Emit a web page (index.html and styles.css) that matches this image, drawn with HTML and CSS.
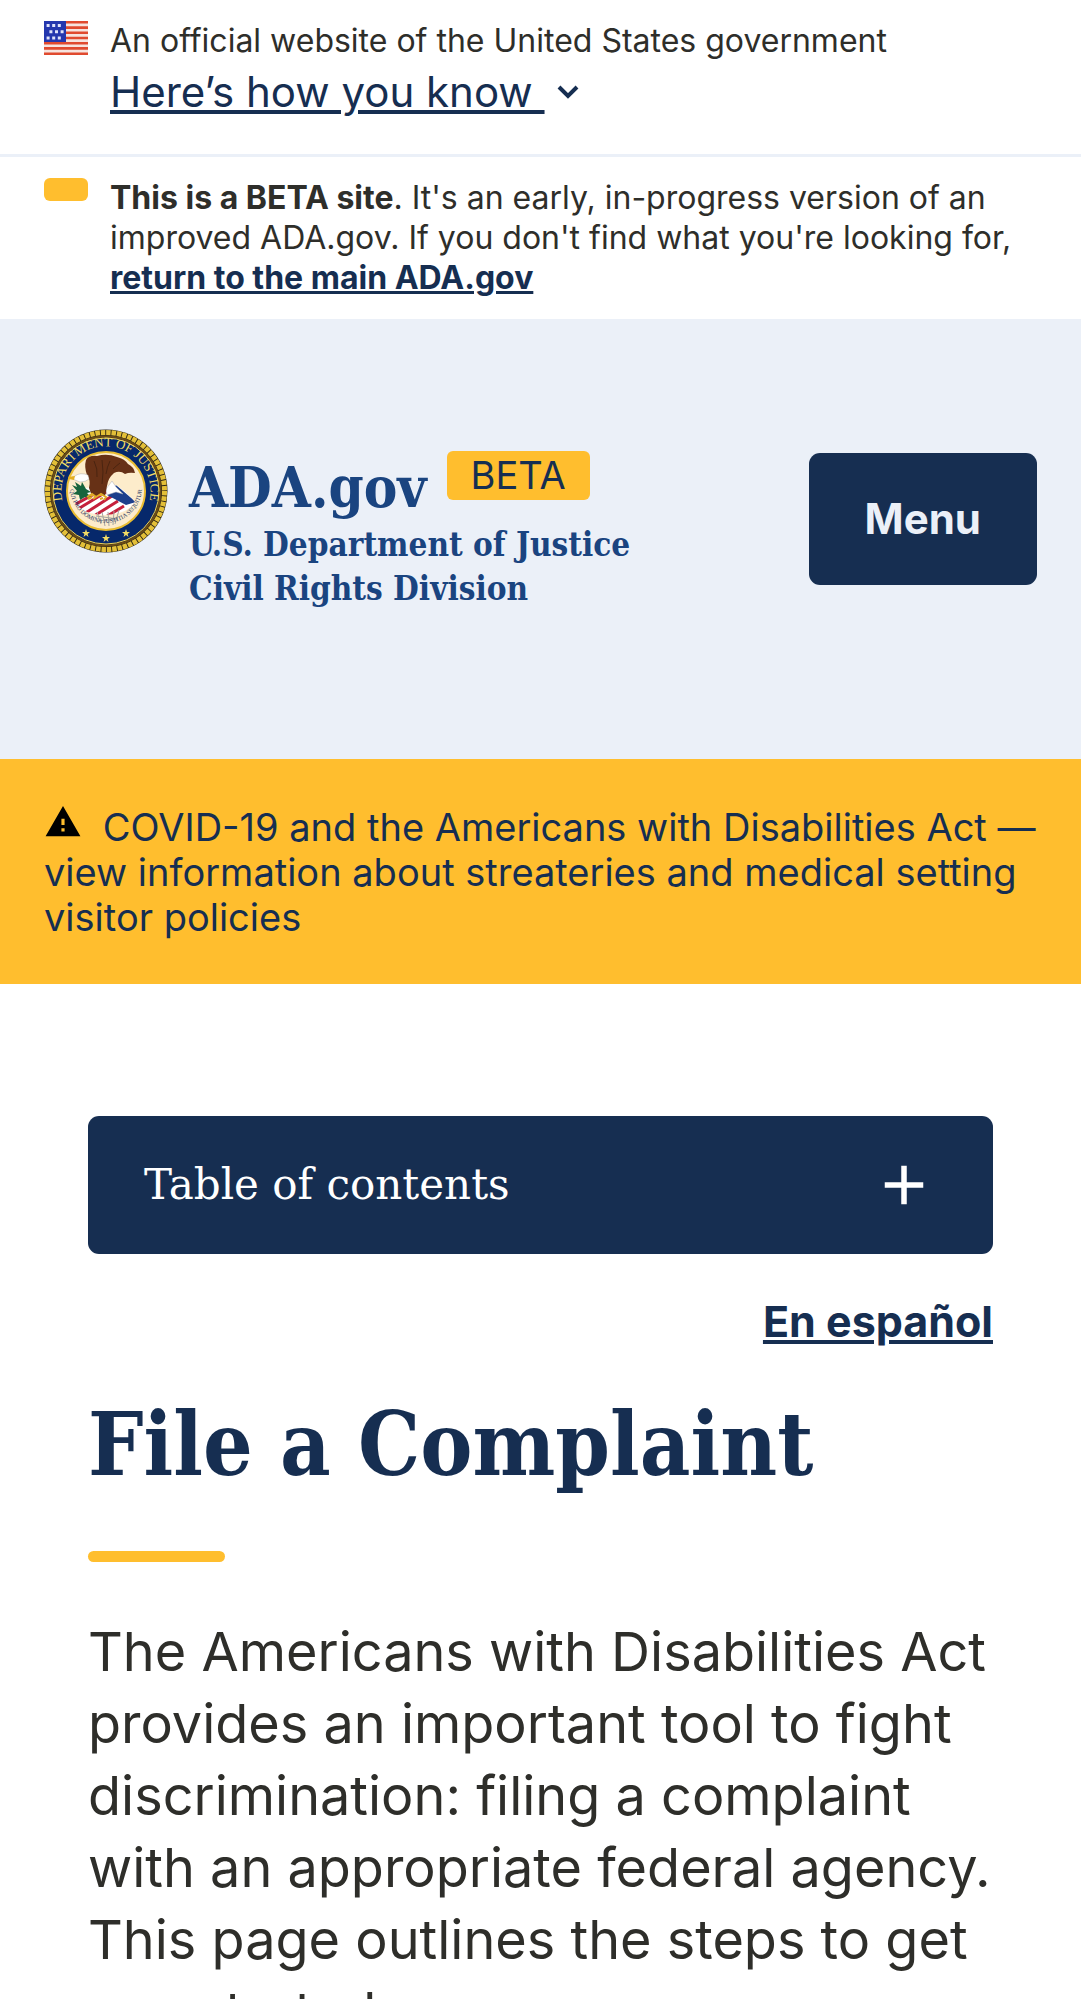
FILE: index.html
```html
<!DOCTYPE html>
<html lang="en">
<head>
<meta charset="utf-8">
<meta name="viewport" content="width=device-width, initial-scale=1">
<title>File a Complaint | ADA.gov</title>
<link rel="stylesheet" href="styles.css">
</head>
<body>
<section class="banner" aria-label="Official government website">
  <svg class="banner-flag" viewBox="0 0 44 34" aria-hidden="true">
    <rect width="44" height="34" fill="#f6e4df"/>
    <path stroke="#e04a2f" stroke-width="2.6" d="M0 1.3h44M0 6.6h44M0 11.8h44M0 17h44M0 22.2h44M0 27.4h44M0 32.7h44"/>
    <rect width="22" height="21" fill="#2437ae"/>
    <path stroke="#dfe3fa" stroke-width="3" stroke-dasharray="3 2.6" d="M2.6 4.5h14.2M5.4 10.7h14.2M2.6 17h14.2"/>
  </svg>
  <div class="banner-text">
    <p class="small">An official website of the United States government</p>
    <button class="banner-toggle" type="button"><span>Here’s how you know </span><svg class="chevron" viewBox="0 0 22 14" aria-hidden="true"><path d="M2 2l9 9 9-9" fill="none" stroke="currentColor" stroke-width="4"/></svg></button>
  </div>
</section>

<section class="beta" aria-label="Beta notice">
  <span class="beta-pill"></span>
  <p class="small"><strong>This is a BETA site</strong>. It's an early, in-progress version of an improved ADA.gov. If you don't find what you're looking for, <a class="beta-link" href="#">return to the main ADA.gov</a></p>
</section>

<header class="header">
  <svg class="seal" viewBox="0 0 124 124" role="img" aria-label="Department of Justice seal">
    <defs>
      <path id="ring-top" d="M20.5 78 A44.5 44.5 0 1 1 103.500 78"/>
      <path id="ring-motto" d="M26 58 A36 36 0 1 0 98 58"/>
      <clipPath id="shield"><path d="M31 74Q38 68 40 59L72 56Q84 64 91 73Q84 85 61 86Q40 86 31 74z"/></clipPath>
    </defs>
    <circle cx="62" cy="62" r="61.500" fill="#2b2415"/>
    <circle cx="62" cy="62" r="58.500" fill="none" stroke="#e3bf38" stroke-width="5" stroke-dasharray="4.500 .9"/>
    <circle cx="62" cy="62" r="54.500" fill="none" stroke="#6b4c17" stroke-width="2"/>
    <circle cx="62" cy="62" r="53" fill="#06286b" stroke="#f0d357" stroke-width="1"/>
    <circle cx="62" cy="62" r="39" fill="#fdeccb" stroke="#e9bd32" stroke-width="2"/>
    <text class="seal-name"><textPath href="#ring-top" startOffset="50%" text-anchor="middle">DEPARTMENT OF JUSTICE</textPath></text>
    <g clip-path="url(#shield)">
      <path d="M28 52h66v36H28z" fill="#fff"/>
      <path stroke="#c5203c" stroke-width="3" d="M30 76l24-13M34 80l28-17M40 85l28-18M50 87l24-15M60 89l20-12"/>
      <path d="M63 66l9-10 20 17-10 3z" fill="#1c3f8c"/>
    </g>
    <path d="M53 83l4 12M58 83l3 14M64 83l1 14M70 82l-1 14M75 81l-4 14M52 87l22 3M54 92l19-2" stroke="#a5a5a0" stroke-width="1" fill="none"/>
    <text class="seal-motto"><textPath href="#ring-motto" startOffset="50%" text-anchor="middle">QUI PRO DOMINA JUSTITIA SEQUITUR</textPath></text>
    <path d="M28 56l5 2-2-5 6 4 1-4 4 7 5 3-4 1 5 5-7-1-5 3-1-5-6-1 4-3z" fill="#17643d"/>
    <path d="M62 60l6-8 4 6 7 7-7-2-9 3z" fill="#fff" stroke="#a9adb5" stroke-width=".5"/>
    <path d="M42 31Q45 26 53 27Q63 24 73 28Q81 30 84 35Q90 38 91 44Q85 43 81 45Q76 41 70 44Q64 49 63 57L61 67L48 67L45 59Q47 51 43 46Q40 38 42 31Z" fill="#673116"/>
    <path d="M50 32q4 8 3 16M58 31q2 12 0 24M66 32q-3 6-4 13M76 34q-4 3-7 6" stroke="#4a2410" fill="none"/>
    <path d="M44 46q-8-3-13 1l-4 2 4 2 5 2q6 0 9-3z" fill="#fff" stroke="#999" stroke-width=".4"/>
    <path d="M24 48l7-1-1 4-5-1z" fill="#e5ae20"/>
    <path d="M43 68l5-3 4 3-3 2M52 68l5-3 5 3-2 3M44 70l4-2M56 70l3-1" fill="none" stroke="#dfa928" stroke-width="2"/>
    <g fill="#f3dc65">
      <path d="M62 105l1 3h3l-2.400 1.900.900 3-2.500-1.800-2.500 1.800.900-3L58 108h3z"/>
      <path d="M42 100l1 3h3l-2.400 1.900.900 3-2.500-1.800-2.500 1.800.900-3L38 103h3z"/>
      <path d="M82 100l1 3h3l-2.400 1.900.900 3-2.500-1.800-2.500 1.800.900-3L78 103h3z"/>
    </g>
  </svg>
  <div class="identity">
    <div class="identity-top"><a class="site-name" href="#">ADA.gov</a><span class="beta-tag">BETA</span></div>
    <p class="agency">U.S. Department of Justice<br>Civil Rights Division</p>
  </div>
  <button class="menu" type="button">Menu</button>
</header>

<aside class="alert">
  <a class="alert-link" href="#"><svg class="alert-icon" viewBox="0 2 24 22" aria-hidden="true"><path d="M1 21h22L12 2 1 21zm12-3h-2v-2h2v2zm0-4h-2v-4h2v4z"/></svg> COVID-19 and the Americans with Disabilities Act — view information about streateries and medical setting visitor policies</a>
</aside>

<main class="main">
  <button class="toc" type="button">Table of contents<svg class="toc-plus" viewBox="0 0 24 24" aria-hidden="true"><path d="M19 13h-6v6h-2v-6H5v-2h6V5h2v6h6v2z" fill="currentColor"/></svg></button>
  <a class="language" href="#" lang="es">En español</a>
  <h1 class="title">File a Complaint</h1>
  <p class="lead">The Americans with Disabilities Act provides an important tool to fight discrimination: filing a complaint with an appropriate federal agency. This page outlines the steps to get you started.</p>
</main>
</body>
</html>
```
FILE: styles.css
```css
:root {
  --navy: #162e51;
  --blue: #1a4480;
  --gold: #ffbe2e;
  --mist: #ebf0f8;
  --ink: #2e2e2a;
  --sans: "Inter", "Liberation Sans", sans-serif;
  --serif: "DejaVu Serif", serif;
  --serif-condensed: "DejaVu Serif Condensed", "DejaVu Serif", serif;
}

* { box-sizing: border-box; }

body {
  margin: 0;
  background: #fff;
  color: var(--ink);
  font-family: var(--sans);
}

p, h1 { margin: 0; }

button {
  border: 0;
  padding: 0;
  background: none;
  font: inherit;
  text-align: left;
  cursor: pointer;
}

.banner, .beta {
  display: flex;
  align-items: flex-start;
  gap: 22px;
  padding: 21px 44px;
}

.banner {
  padding-bottom: 35px;
  border-bottom: 3px solid var(--mist);
}

.banner-flag { flex: none; width: 44px; height: 34px; }

.banner-text { display: flex; flex-direction: column; gap: 4px; }

.small { font-size: 32px; line-height: 40px; }

.banner-toggle {
  display: flex;
  align-items: center;
  gap: 12px;
  color: var(--navy);
  font-size: 42px;
  line-height: 54px;
}

.banner-toggle span { text-decoration: underline; white-space: pre; }

.chevron { width: 22px; height: 14px; }

.beta-pill {
  flex: none;
  width: 44px;
  height: 23px;
  border-radius: 6px;
  background: var(--gold);
}

.beta-link { color: var(--navy); font-weight: 700; }

.header {
  display: flex;
  align-items: flex-start;
  gap: 21px;
  padding: 110px 44px 148px;
  background: var(--mist);
}

.seal { flex: none; width: 124px; height: 124px; }

.seal-name { fill: #f3dc65; font: 13px "Liberation Serif", serif; }
.seal-motto { fill: #1c3565; font: 6px "Liberation Serif", serif; }

.identity {
  flex: 1;
  margin-top: 22px;
  color: var(--blue);
  font-family: var(--serif-condensed);
  font-weight: 700;
}

.identity-top { display: flex; align-items: flex-start; gap: 20px; }

.site-name { color: inherit; font-size: 56px; line-height: 72px; text-decoration: none; }

.beta-tag {
  padding: 0 24px;
  border-radius: 6px;
  background: var(--gold);
  color: var(--navy);
  font: 38px/49px var(--sans);
}

.agency { font-size: 33px; line-height: 44px; }

.menu {
  margin-top: 24px;
  padding: 0 56px;
  border-radius: 11px;
  background: var(--navy);
  color: var(--mist);
  font-size: 42px;
  font-weight: 700;
  line-height: 132px;
}

.alert { padding: 46px 22px 44px 44px; background: var(--gold); }

.alert-link { color: var(--navy); font-size: 38px; line-height: 45px; text-decoration: none; }

.alert-icon { width: 38px; height: 35px; margin-right: 10px; fill: #000; }

.main { display: flex; flex-direction: column; padding: 132px 88px 44px; }

.toc {
  display: flex;
  align-items: center;
  justify-content: space-between;
  padding: 36px 56px;
  border-radius: 11px;
  background: var(--navy);
  color: #fff;
  font-family: var(--serif);
  font-size: 42px;
  line-height: 66px;
}

.toc-plus { width: 66px; height: 66px; }

.language {
  align-self: flex-end;
  margin-top: 40px;
  color: var(--navy);
  font-size: 43px;
  font-weight: 700;
  line-height: 54px;
}

.title {
  margin-top: 41px;
  color: var(--navy);
  font-family: var(--serif-condensed);
  font-size: 87px;
  line-height: 112px;
}

.title::after {
  content: "";
  display: block;
  width: 137px;
  height: 11px;
  margin-top: 50px;
  border-radius: 6px;
  background: var(--gold);
}

.lead { margin-top: 54px; font-size: 54px; line-height: 72px; }
```
